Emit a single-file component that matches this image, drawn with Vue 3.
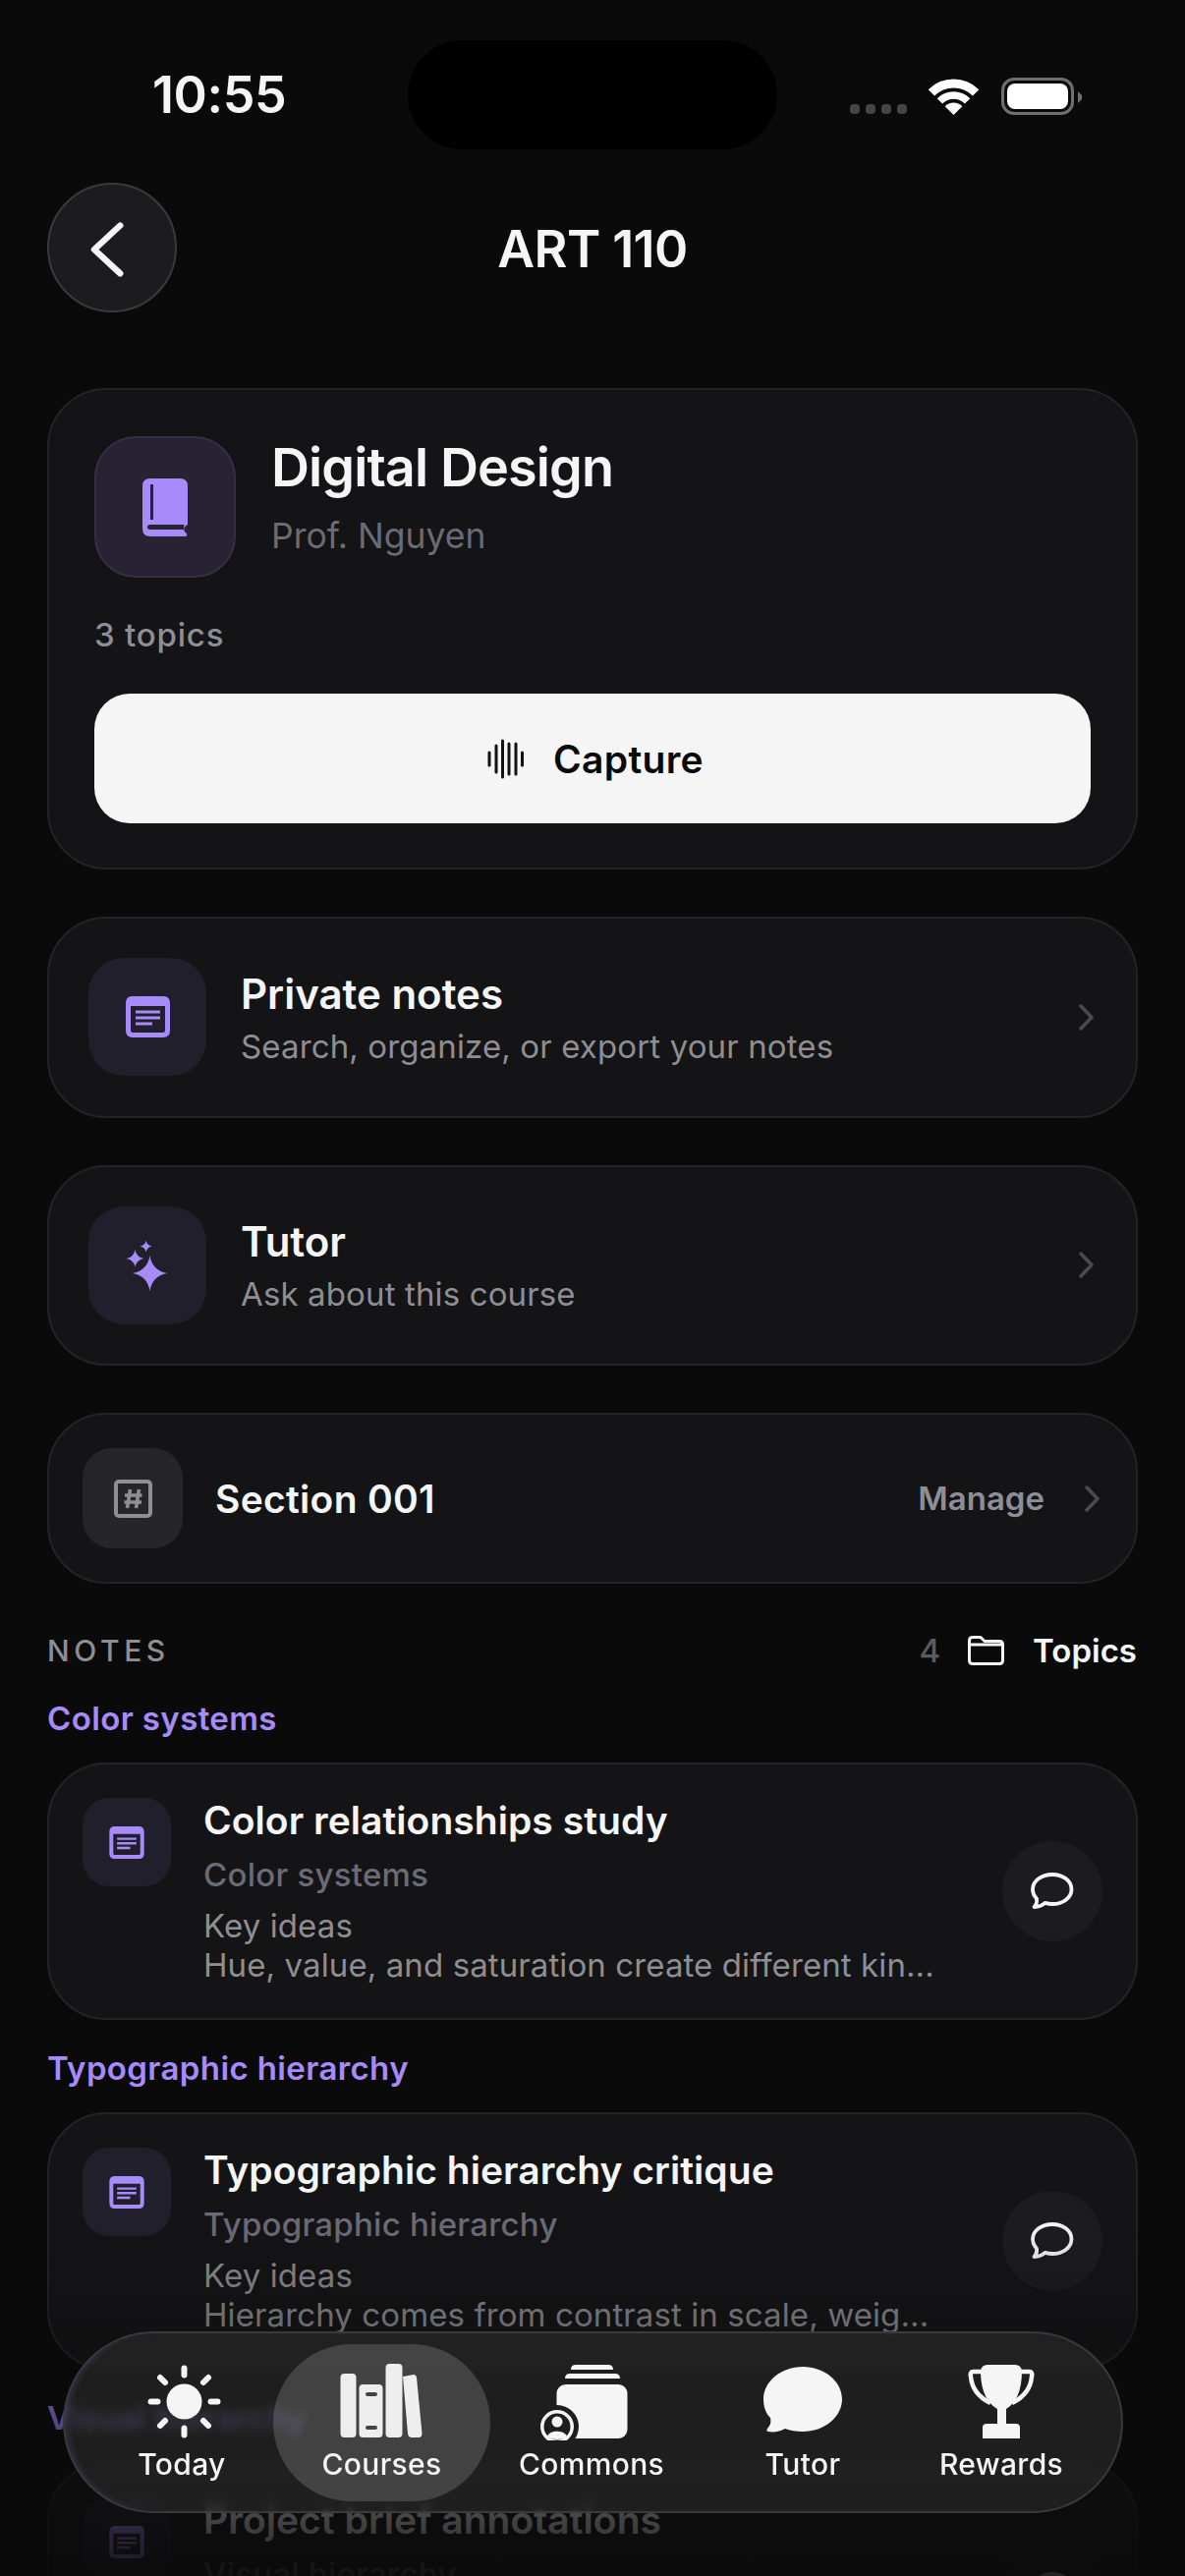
<script setup>
const notes = [
  { topic: 'Color systems', title: 'Color relationships study', line: 'Hue, value, and saturation create different kin...' },
  { topic: 'Typographic hierarchy', title: 'Typographic hierarchy critique', line: 'Hierarchy comes from contrast in scale, weig...' },
  { topic: 'Visual hierarchy', title: 'Project brief annotations', line: 'Clear focal points guide the viewer through the...' }
]
const star = (cx, cy, r) => {
  const k = r * 0.14
  return `M${cx} ${cy - r}Q${cx + k} ${cy - k} ${cx + r} ${cy}Q${cx + k} ${cy + k} ${cx} ${cy + r}Q${cx - k} ${cy + k} ${cx - r} ${cy}Q${cx - k} ${cy - k} ${cx} ${cy - r}Z`
}
</script>

<template>
  <div class="screen">
    <div class="status">
      <span class="time">10:55</span>
      <div class="island"></div>
      <div class="sys">
        <div class="dots"><i></i><i></i><i></i><i></i></div>
        <svg class="wifi" width="52" height="37" viewBox="0 0 52 37">
          <path d="M2.900 14.400A32 32 0 0 1 48.100 14.400" fill="none" stroke="#fff" stroke-width="9"/>
          <path d="M11.400 22.900A20 20 0 0 1 39.600 22.900" fill="none" stroke="#fff" stroke-width="7.500"/>
          <path d="M25.500 37L16.700 28.200A12.500 12.500 0 0 1 34.300 28.200Z" fill="#fff"/>
        </svg>
        <div class="battery"><div class="cell"></div></div>
        <svg class="nub" width="4" height="12" viewBox="0 0 4 12"><path d="M0 0L4 4V8L0 12Z" fill="#6f6f6f"/></svg>
      </div>
    </div>

    <header class="bar">
      <button class="back">
        <svg width="131" height="131" viewBox="0 0 131 131"><path d="M74 42L47 67L74 92" fill="none" stroke="#f5f5f5" stroke-width="6.500" stroke-linecap="round" stroke-linejoin="round"/></svg>
      </button>
      <h1 class="page-title">ART 110</h1>
    </header>

    <main class="main">
      <section class="card hero">
        <div class="hero-top">
          <div class="hero-icon">
            <svg width="46" height="59" viewBox="0 0 46 59">
              <path fill="#a78bfa" fill-rule="evenodd" d="M8 0H38Q46 0 46 8V47C42 49 41 53 44 55Q47 59 43 59H8Q0 59 0 51V8Q0 0 8 0ZM8 6V42H11V6ZM8 47Q5 47 5 49.500Q5 52 8 52H42Q42 49 42.500 47Z"/>
            </svg>
          </div>
          <div>
            <h2 class="hero-title">Digital Design</h2>
            <p class="hero-sub">Prof. Nguyen</p>
          </div>
        </div>
        <p class="count">3 topics</p>
        <button class="capture">
          <svg width="37" height="41" viewBox="0 0 37 41">
            <g stroke="#111" stroke-width="3" stroke-linecap="round">
              <path d="M2 14V27M9 7V34M15.500 2V39M22 5V36M29 5V36M35.500 14V27"/>
            </g>
          </svg>
          <span>Capture</span>
        </button>
      </section>

      <div class="card row">
        <div class="tile">
          <svg width="45" height="42" viewBox="0 0 45 42">
            <path fill="#a78bfa" fill-rule="evenodd" d="M7 0H38Q45 0 45 7V35Q45 42 38 42H7Q0 42 0 35V7Q0 0 7 0ZM5 10V35Q5 37 7 37H38Q40 37 40 35V10Z"/>
            <path d="M10 16H35M10 22H35M10 28H27" stroke="#a78bfa" stroke-width="2.800"/>
          </svg>
        </div>
        <div class="row-text">
          <div class="row-title">Private notes</div>
          <div class="row-sub">Search, organize, or export your notes</div>
        </div>
        <svg class="chev" width="15" height="27" viewBox="0 0 15 27"><path d="M2 2L13 13.500L2 25" fill="none" stroke="#4a4a52" stroke-width="3.500" stroke-linecap="round" stroke-linejoin="round"/></svg>
      </div>

      <div class="card row">
        <div class="tile">
          <svg width="120" height="120" viewBox="0 0 120 120" fill="#a78bfa">
            <path :d="star(62.5, 68, 18)"/><path :d="star(47.5, 53, 9)"/><path :d="star(58.6, 40.6, 6)"/>
          </svg>
        </div>
        <div class="row-text">
          <div class="row-title">Tutor</div>
          <div class="row-sub">Ask about this course</div>
        </div>
        <svg class="chev" width="15" height="27" viewBox="0 0 15 27"><path d="M2 2L13 13.500L2 25" fill="none" stroke="#4a4a52" stroke-width="3.500" stroke-linecap="round" stroke-linejoin="round"/></svg>
      </div>

      <div class="card row section">
        <div class="tile gray">
          <svg width="39" height="39" viewBox="0 0 39 39">
            <rect x="2" y="2" width="35" height="35" rx="3" fill="none" stroke="#8e8e93" stroke-width="4"/>
            <path d="M16.500 10L13.500 29M25.500 10L22.500 29M11 16H28.500M10.500 23H28" fill="none" stroke="#8e8e93" stroke-width="3.600"/>
          </svg>
        </div>
        <div class="section-title">Section 001</div>
        <span class="manage">Manage</span>
        <svg class="chev" width="15" height="27" viewBox="0 0 15 27"><path d="M2 2L13 13.500L2 25" fill="none" stroke="#4a4a52" stroke-width="3.500" stroke-linecap="round" stroke-linejoin="round"/></svg>
      </div>

      <div class="notes-head">
        <span class="notes-label">NOTES</span>
        <span class="notes-count">4</span>
        <svg width="37" height="30" viewBox="0 0 37 30"><path d="M1.500 25V5Q1.500 1.500 5 1.500H13L17 5.500H32Q35.500 5.500 35.500 9V25Q35.500 28.500 32 28.500H5Q1.500 28.500 1.500 25ZM2 9H35" fill="none" stroke="#f5f5f5" stroke-width="3" stroke-linejoin="round"/></svg>
        <span class="topics">Topics</span>
      </div>

      <div class="groups">
        <div v-for="n in notes" :key="n.title" class="group">
          <div class="topic">{{ n.topic }}</div>
          <article class="card note">
            <div class="note-icon">
              <svg width="36" height="33" viewBox="0 0 45 42">
                <path fill="#a78bfa" fill-rule="evenodd" d="M7 0H38Q45 0 45 7V35Q45 42 38 42H7Q0 42 0 35V7Q0 0 7 0ZM5 10V35Q5 37 7 37H38Q40 37 40 35V10Z"/>
                <path d="M10 16H35M10 22H35M10 28H27" stroke="#a78bfa" stroke-width="3"/>
              </svg>
            </div>
            <div class="note-text">
              <div class="note-title">{{ n.title }}</div>
              <div class="note-topic">{{ n.topic }}</div>
              <div class="note-body">Key ideas</div>
              <div class="note-body">{{ n.line }}</div>
            </div>
            <div class="chat">
              <svg width="44" height="38" viewBox="0 0 44 38"><path d="M22 2C33 2 41.500 8.500 41.500 17C41.500 25.500 33 32 22 32C19.500 32 17 31.500 14.500 30.800C12 33.500 8 35 3.500 35C5.500 33 6.500 30 6 26.500C3.500 24 2 20.500 2 17C2 8.500 11 2 22 2Z" fill="none" stroke="#f5f5f5" stroke-width="3.800" stroke-linejoin="round"/></svg>
            </div>
          </article>
        </div>
      </div>
    </main>

    <div class="fade"></div>

    <nav class="nav">
      <div class="item">
        <svg width="110" height="80" viewBox="0 0 110 80" fill="#f5f5f5">
          <circle cx="57.500" cy="40.500" r="18"/>
          <path d="M57.500 6.500V13.500M57.500 67.500V74.500M23.500 40.500H30.500M84.500 40.500H91.500M33 16L38 21M77 60L82 65M33 65L38 60M77 21L82 16" stroke="#f5f5f5" stroke-width="6" stroke-linecap="round"/>
        </svg>
        <span>Today</span>
      </div>
      <div class="item active">
        <svg width="110" height="80" viewBox="0 0 110 80" fill="#eeeeee">
          <rect x="12.500" y="12" width="16" height="65" rx="4"/>
          <rect x="31.500" y="23" width="24" height="54" rx="4"/>
          <path d="M40 33H48M40 67H48" stroke="#434344" stroke-width="4" stroke-linecap="round"/>
          <rect x="58.500" y="2" width="17" height="75" rx="4"/>
          <path d="M76 15L87 13Q89.500 13 90 16L95.500 73Q95.500 77 92 77H85Q81.500 77 81 73Z"/>
        </svg>
        <span>Courses</span>
      </div>
      <div class="item">
        <svg width="110" height="80" viewBox="0 0 110 80" fill="#f5f5f5">
          <path d="M34 8Q34 3 39 3H72Q77 3 77 8ZM28 17Q28 12 33 12H79Q84 12 84 17Z"/>
          <rect x="19.500" y="23" width="72" height="55" rx="9"/>
          <circle cx="20" cy="66" r="22" fill="#1e1e1f"/>
          <circle cx="20" cy="66" r="17"/>
          <circle cx="20" cy="66" r="13.500" fill="#1e1e1f"/>
          <circle cx="20" cy="61" r="5.500"/>
          <path d="M10 76C12 69 28 69 30 76C26 80 14 80 10 76Z"/>
        </svg>
        <span>Commons</span>
      </div>
      <div class="item">
        <svg width="110" height="80" viewBox="0 0 110 80" fill="#f5f5f5">
          <path d="M55 5C77 5 95 20 95 38C95 56 77 71 55 71C48 71 42 70 37 68C32 71 25 72 20 71C18 71 18 69 19 68C22 65 23 61 22 57C17 52 15 45 15 38C15 20 33 5 55 5Z"/>
        </svg>
        <span>Tutor</span>
      </div>
      <div class="item">
        <svg width="110" height="80" viewBox="0 0 110 80" fill="#f5f5f5">
          <path d="M41 3H69Q75 3 76 9C76 30 70 42 60 48V63H70Q74 63 74 67V78H36V67Q36 63 40 63H51V48C41 42 34 30 34 9Q35 3 41 3Z"/>
          <path d="M36 10H26Q23 10 24 15C25 27 32 36 44 42M74 10H84Q87 10 86 15C85 27 78 36 66 42" fill="none" stroke="#f5f5f5" stroke-width="4.500"/>
        </svg>
        <span>Rewards</span>
      </div>
    </nav>
  </div>
</template>

<style>
html, body { margin: 0; background: #0a0a0a; }
</style>

<style scoped>
.screen { position: relative; width: 1206px; height: 2622px; overflow: hidden; background: #0a0a0a; color: #f5f5f5; font-family: Inter, "Noto Sans", sans-serif; }
h1, h2, p { margin: 0; }
.status { display: flex; align-items: center; height: 111px; padding: 41px 0 0 155px; }
.time { width: 260px; font-size: 52px; font-weight: 600; letter-spacing: -0.4px; }
.island { width: 376px; height: 111px; flex: none; border-radius: 56px; background: #000; }
.sys { display: flex; align-items: flex-end; height: 39px; margin: 4px 0 0 74px; }
.dots { display: flex; gap: 6px; margin-bottom: 2px; }
.dots i { width: 10px; height: 10px; border-radius: 4px; background: #454547; }
.wifi { margin: 0 0 1px 22px; }
.battery { box-sizing: border-box; width: 74px; height: 38px; margin: 0 0 1px 22px; padding: 3px; border: 3px solid #6f6f6f; border-radius: 13px; }
.cell { height: 100%; border-radius: 8px; background: #fff; }
.nub { margin: 0 0 13px 4px; }
.bar { display: grid; grid-template-columns: 132px 1fr 132px; align-items: center; margin-top: 34px; padding: 0 48px; }
.back { box-sizing: border-box; width: 132px; height: 132px; padding: 0; border: 2px solid #3a3a3c; border-radius: 50%; background: #1c1c1e; display: flex; align-items: center; justify-content: center; }
.page-title { padding-top: 3px; text-align: center; font-size: 52px; font-weight: 600; line-height: 62px; letter-spacing: -0.6px; }
.main { display: flex; flex-direction: column; gap: 48px; margin-top: 77px; padding: 0 48px; }
.card { box-sizing: border-box; border: 2px solid #242427; border-radius: 60px; background: #141416; }
.hero { padding: 47px 46px 45px; }
.hero-top { display: flex; gap: 36px; }
.hero-icon { box-sizing: border-box; width: 144px; height: 144px; flex: none; display: flex; align-items: center; justify-content: center; border: 2px solid #342e47; border-radius: 42px; background: #272333; }
.hero-title { font-size: 54px; font-weight: 600; line-height: 64px; letter-spacing: -0.9px; }
.hero-sub { margin-top: 16px; font-size: 35.500px; line-height: 44px; color: #6b6b76; }
.count { margin-top: 37px; font-size: 33px; font-weight: 500; line-height: 42px; letter-spacing: 0.8px; color: #8e8e96; }
.capture { width: 100%; height: 132px; margin-top: 39px; padding-left: 12px; display: flex; align-items: center; justify-content: center; gap: 30px; border: 0; border-radius: 36px; background: #f5f5f5; color: #0a0a0a; font: 600 39px Inter, sans-serif; letter-spacing: 0.3px; }
.row { display: flex; align-items: center; height: 204.500px; padding: 0 43px 0 40px; gap: 35px; }
.tile { width: 120px; height: 120px; flex: none; display: flex; align-items: center; justify-content: center; border-radius: 36px; background: #201f2b; }
.tile.gray { width: 102px; height: 102px; border-radius: 30px; background: #262629; }
.row-text { flex: 1; padding-top: 3px; }
.row-title { font-size: 42px; font-weight: 600; line-height: 50px; }
.row-sub { margin-top: 6px; font-size: 33px; line-height: 44px; letter-spacing: 0.13px; color: #8e8e93; }
.chev { flex: none; }
.section { height: 174px; padding: 0 37px 0 34px; gap: 33px; }
.section-title { flex: 1; font-size: 39px; font-weight: 600; letter-spacing: 0.3px; }
.manage { margin-right: 8px; font-size: 33px; font-weight: 600; color: #8e8e96; }
.notes-head { display: flex; align-items: center; height: 40px; margin-bottom: -19px; }
.notes-label { flex: 1; font-size: 30px; font-weight: 500; letter-spacing: 4.600px; color: #8e8e93; }
.notes-count { margin-right: 28px; font-size: 33px; font-weight: 500; color: #5a5a62; }
.topics { margin: 0 1px 0 29px; font-size: 33px; font-weight: 600; }
.groups { display: flex; flex-direction: column; gap: 29px; }
.topic { height: 40px; margin-bottom: 25px; font-size: 33px; font-weight: 600; line-height: 40px; letter-spacing: 0.38px; color: #a78bfa; }
.note { height: 262px; display: flex; padding: 34px; }
.note-icon { width: 90px; height: 90px; flex: none; display: flex; align-items: center; justify-content: center; border-radius: 27px; background: #201f2b; }
.note-text { flex: 1; margin: -2px 0 0 33px; }
.note-title { font-size: 39px; font-weight: 600; line-height: 50px; letter-spacing: 0.05px; }
.note-topic { margin-top: 9px; margin-bottom: 11px; font-size: 33px; font-weight: 500; line-height: 42px; letter-spacing: 0.25px; color: #6b6b76; }
.note-body { font-size: 33px; line-height: 40px; letter-spacing: 0.1px; color: #8e8e93; }
.chat { width: 102px; height: 102px; flex: none; align-self: center; display: flex; align-items: center; justify-content: center; border-radius: 50%; background: #1c1c1f; }
.fade { position: absolute; left: 0; right: 0; top: 2260px; bottom: 0; background: linear-gradient(to bottom, rgba(10,10,10,0), rgba(10,10,10,0.9)); }
.nav { position: absolute; left: 64px; top: 2373px; box-sizing: border-box; width: 1079px; height: 185px; display: grid; grid-template-columns: 186px 221px 206px 224px 180px; padding: 11px 0 0 26px; border: 2px solid #3a3a3c; border-radius: 93px; background: rgba(43,43,44,0.62); backdrop-filter: blur(5px); box-shadow: inset 6px 0 6px -3px rgba(90,80,140,0.35); }
.item { height: 160px; box-sizing: border-box; padding-top: 18px; display: flex; flex-direction: column; align-items: center; border-radius: 80px; }
.item svg { flex: none; display: block; }
.item span { margin-top: 4px; font-size: 30px; font-weight: 500; line-height: 40px; letter-spacing: 0.35px; color: #f5f5f5; }
.item.active { background: rgba(255,255,255,0.16); }
</style>
